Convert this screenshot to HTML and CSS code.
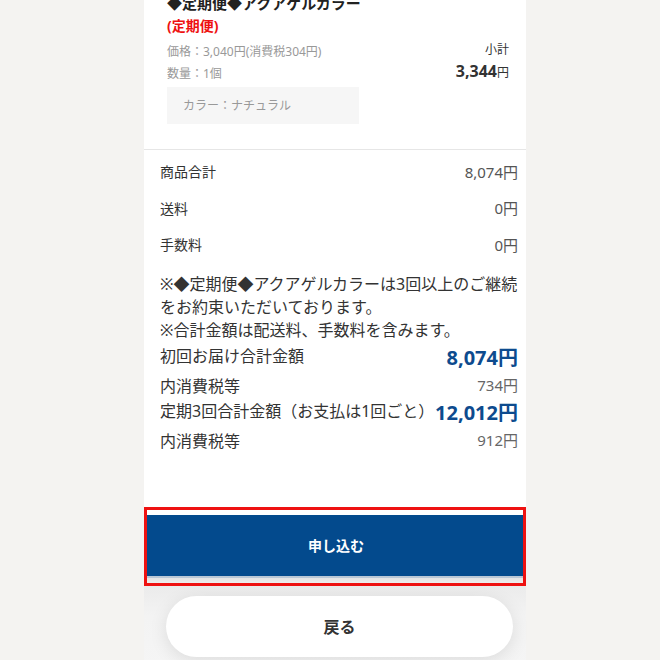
FILE: index.html
```html
<!DOCTYPE html>
<html lang="ja">
<head>
  <meta charset="UTF-8">
  <meta name="viewport" content="width=device-width, initial-scale=1.0">
  <title>ご注文内容の確認</title>
  <link rel="stylesheet" href="styles.css">
</head>
<body>
  <div class="page">
    <!-- Cart item -->
    <div class="item">
      <div class="item-info">
        <p class="item-name">◆定期便◆アクアゲルカラー</p>
        <p class="item-tag">(定期便)</p>
        <p class="item-meta">価格：3,040円(消費税304円)</p>
        <p class="item-meta">数量：1個</p>
        <div class="item-option">カラー：ナチュラル</div>
      </div>
      <div class="item-sub">
        <p class="sub-label">小計</p>
        <p class="sub-price">3,344<span>円</span></p>
      </div>
    </div>

    <!-- Totals -->
    <div class="summary">
      <div class="row"><span>商品合計</span><span class="row-val">8,074円</span></div>
      <div class="row"><span>送料</span><span class="row-val">0円</span></div>
      <div class="row"><span>手数料</span><span class="row-val">0円</span></div>

      <p class="note">※◆定期便◆アクアゲルカラーは3回以上のご継続をお約束いただいております。<br>※合計金額は配送料、手数料を含みます。</p>

      <div class="total main"><span>初回お届け合計金額</span><span class="total-val">8,074円</span></div>
      <div class="total tax"><span>内消費税等</span><span class="tax-val">734円</span></div>
      <div class="total main"><span>定期3回合計金額（お支払は1回ごと）</span><span class="total-val">12,012円</span></div>
      <div class="total tax"><span>内消費税等</span><span class="tax-val">912円</span></div>
    </div>

    <!-- Submit -->
    <div class="submit-area">
      <button type="button" class="btn-submit">申し込む</button>
      <div class="submit-shadow"></div>
    </div>

    <div class="footer">
      <button type="button" class="btn-back">戻る</button>
    </div>
  </div>
</body>
</html>
```

FILE: styles.css
```css
/* General */
* {
  box-sizing: border-box;
}

body {
  margin: 0;
  background: #f4f3f1;
  font-family: "Noto Sans", "Noto Sans CJK JP", sans-serif;
  color: #333;
  overflow: hidden;
}

p {
  margin: 0;
}

.page {
  width: 382px;
  margin-left: 144px;
  background: #fff;
}

/* Item */
.item {
  display: flex;
  justify-content: space-between;
  margin-top: -7px;
  padding: 0 17px 25px 23px;
  border-bottom: 1px solid #e6e6e6;
}

.item-name {
  font-size: 15px;
  font-weight: bold;
  line-height: 20px;
  color: #222;
}

.item-tag {
  margin-top: 3px;
  margin-bottom: 5px;
  font-size: 14px;
  font-weight: bold;
  line-height: 20px;
  color: #ee1111;
}

.item-meta {
  font-size: 12px;
  line-height: 22px;
  color: #999;
}

.item-option {
  width: 192px;
  height: 37px;
  margin-top: 2px;
  padding-left: 16px;
  background: #f6f6f6;
  font-size: 12px;
  line-height: 37px;
  color: #999;
}

.item-sub {
  padding-top: 47px;
  text-align: right;
}

.sub-label {
  font-size: 12px;
  line-height: 20px;
  color: #333;
}

.sub-price {
  font-size: 16px;
  font-weight: bold;
  line-height: 22px;
  color: #333;
}

.sub-price span {
  font-size: 12px;
  font-weight: normal;
}

/* Summary */
.summary {
  padding: 3px 8px 55px 16px;
}

.row {
  display: flex;
  justify-content: space-between;
  align-items: center;
  height: 36.5px;
  font-size: 14px;
  color: #333;
}

.row-val {
  font-size: 15px;
  color: #555;
}

.note {
  margin-top: 10px;
  font-size: 16px;
  line-height: 23px;
  color: #333;
}

.total {
  display: flex;
  justify-content: space-between;
  align-items: center;
  font-size: 16px;
  color: #333;
}

.total.main {
  height: 26px;
}

.total.tax {
  height: 24px;
  margin-top: 5px;
}

.total-val {
  margin-top: 4px;
  font-size: 20px;
  font-weight: bold;
  color: #0d4b8e;
}

.tax-val {
  font-size: 15px;
  color: #666;
}

/* Submit area */
.submit-area {
  border: 3px solid #ee1111;
  padding-top: 5px;
  background: #fff;
}

.btn-submit {
  display: block;
  width: 100%;
  height: 61px;
  padding-left: 8px;
  border: none;
  background: #034a8d;
  color: #fff;
  font-family: inherit;
  font-size: 14px;
  font-weight: bold;
}

.submit-shadow {
  height: 7px;
  border-top: 2px solid #b9c7d6;
  background: linear-gradient(#e4e4e4, #ececec);
}

.footer {
  padding: 10px 13px 10px 22px;
  background: linear-gradient(#ebebeb, #f3f3f3 30px, #f5f5f5);
}

.btn-back {
  display: block;
  width: 100%;
  height: 61px;
  border: none;
  border-radius: 31px;
  background: #fff;
  box-shadow: 0 4px 18px rgba(0, 0, 0, 0.1);
  color: #333;
  font-family: inherit;
  font-size: 16px;
  font-weight: bold;
}
```
